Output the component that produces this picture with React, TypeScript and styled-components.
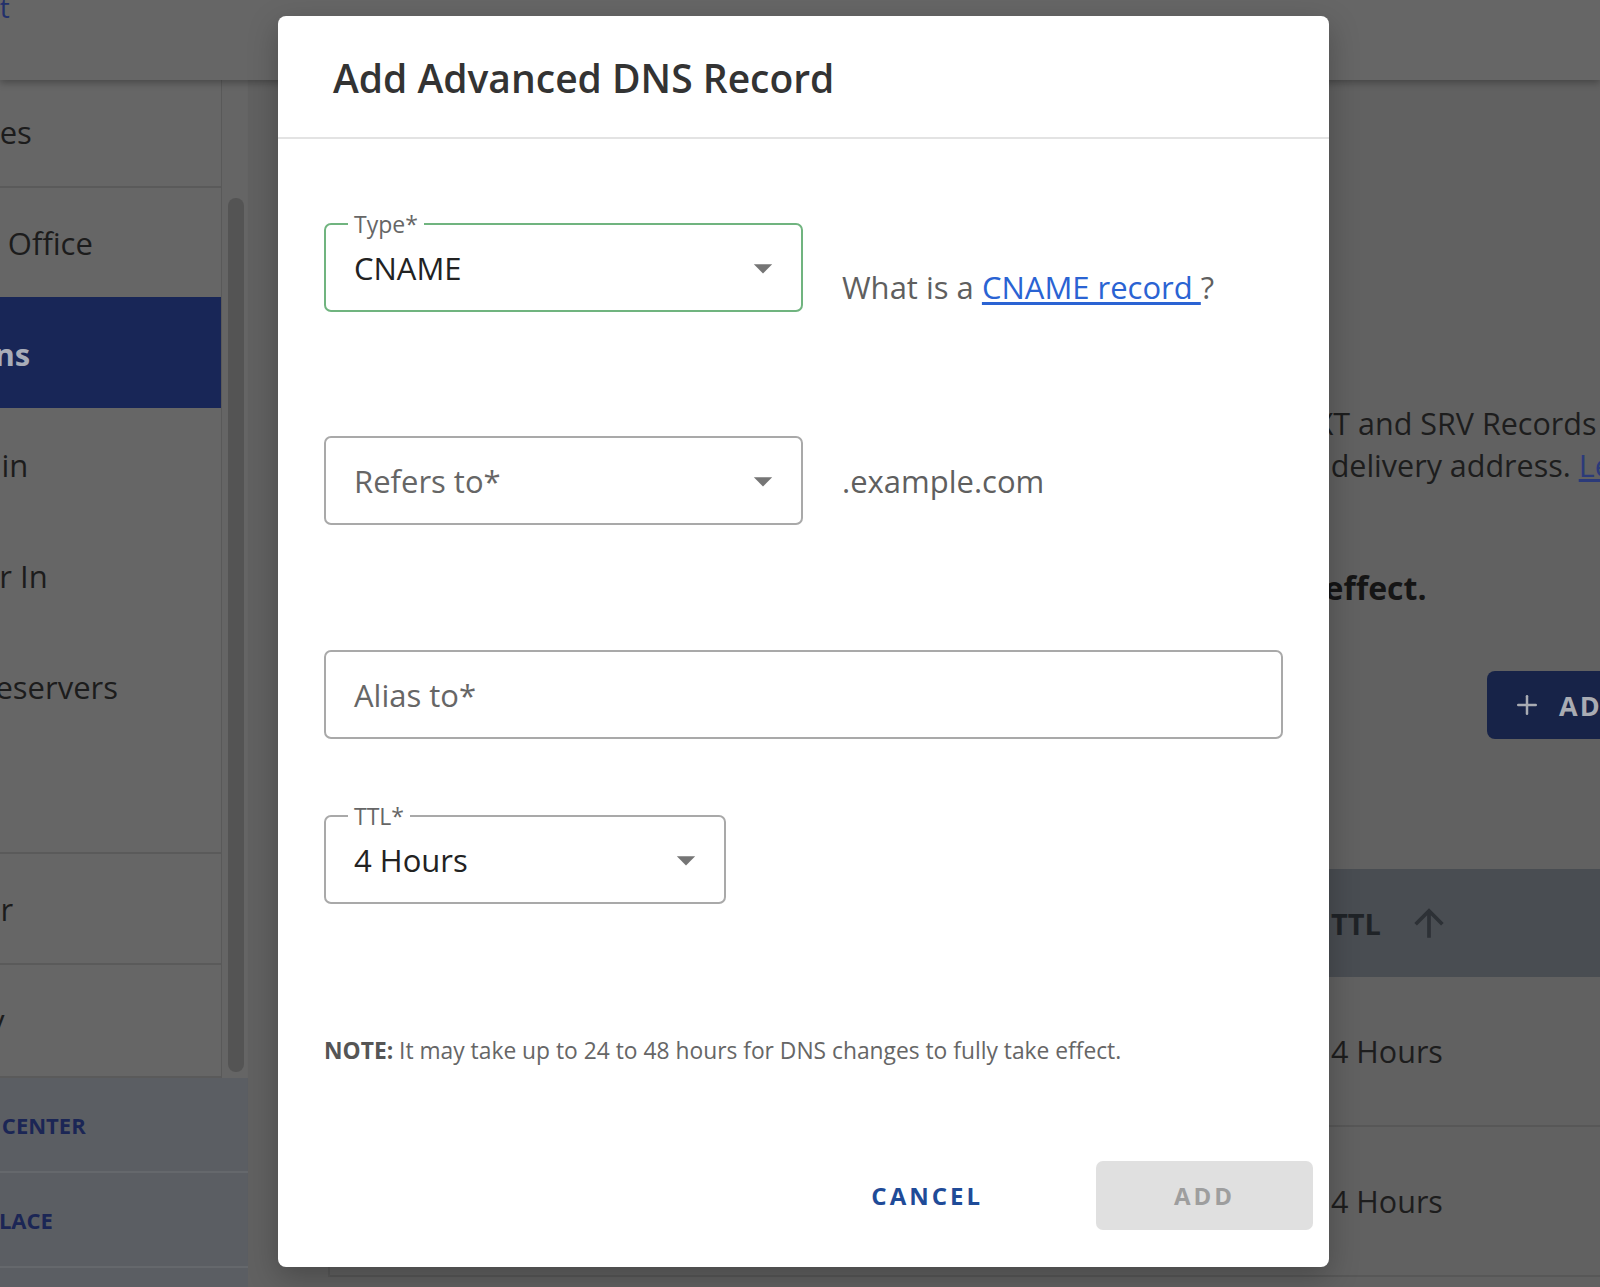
import React from 'react';
import styled, { createGlobalStyle } from 'styled-components';
import { Plus } from 'lucide-react';

const GlobalStyle = createGlobalStyle`
  *, *::before, *::after { box-sizing: border-box; }
  html, body { margin: 0; padding: 0; }
  body {
    font-family: "Open Sans", "Noto Sans", "Liberation Sans", sans-serif;
    background: #616161;
    overflow: hidden;
  }
`;

const Screen = styled.div`
  position: relative;
  width: 1600px;
  height: 1287px;
  overflow: hidden;
  background: #616161;
  display: flex;
  flex-direction: column;
`;

// --- page behind the dialog (already dimmed by the backdrop) ---

const TopBar = styled.header`
  position: relative;
  z-index: 1;
  height: 80px;
  flex-shrink: 0;
  background: #666666;
  box-shadow: 0 3px 7px rgba(0, 0, 0, 0.28);
  overflow: hidden;
`;

const Crumb = styled.a`
  display: block;
  margin: -12px 0 0 -96px;
  font-size: 28px;
  line-height: 38px;
  color: #22306b;
  text-decoration: none;
  white-space: nowrap;
`;

const Workspace = styled.div`
  flex: 1;
  display: flex;
  min-height: 0;
`;

const SideColumn = styled.aside`
  flex-shrink: 0;
  width: 398px;
  margin-left: -150px;
  display: flex;
  flex-direction: column;
`;

const NavArea = styled.div`
  height: 998px;
  flex-shrink: 0;
  display: flex;
`;

const NavList = styled.nav`
  width: 372px;
  overflow: hidden;
  background: #666666;
  border-right: 1px solid #595959;
  border-bottom: 2px solid #5a5a5a;
`;

const NavScroll = styled.div`
  margin-top: -5px;
`;

const NavItem = styled.div<{ $active?: boolean; $divider?: boolean }>`
  height: 111px;
  display: flex;
  align-items: center;
  padding-left: 13px;
  white-space: nowrap;
  font-size: 31px;
  font-weight: ${p => (p.$active ? 700 : 400)};
  color: ${p => (p.$active ? '#a9adb8' : '#1c1c1c')};
  background: ${p => (p.$active ? '#182657' : 'transparent')};
  border-top: 2px solid ${p => (p.$divider ? '#5a5a5a' : 'transparent')};
`;

const ScrollTrack = styled.div`
  width: 26px;
  display: flex;
  padding: 118px 4px 6px 6px;
  background: #656565;
`;

const ScrollThumb = styled.div`
  flex: 1;
  border-radius: 8px;
  background: #545454;
`;

const SideFooter = styled.div`
  flex: 1;
  background: #5b5e63;
`;

const FooterLink = styled.div`
  height: 95px;
  display: flex;
  align-items: center;
  padding-left: 45px;
  white-space: nowrap;
  font-size: 22px;
  font-weight: 700;
  color: #1b2655;
  border-bottom: 2px solid #65686c;
`;

const Main = styled.main`
  flex-shrink: 0;
  width: 1541px;
  padding-left: 80px;
  display: flex;
  flex-direction: column;
`;

const IntroCard = styled.section`
  display: flex;
  flex-direction: column;
  margin-left: -6px;
  padding: 322px 0 41px;
`;

const IntroLine = styled.p`
  margin: 0;
  font-size: 30.5px;
  line-height: 42px;
  color: #1d1d1d;
  white-space: nowrap;
`;

const LearnLink = styled.a`
  color: #2b3a7a;
  text-decoration: underline;
`;

const Warning = styled.p`
  margin: 81px 0 0;
  font-size: 32px;
  font-weight: 700;
  line-height: 42px;
  color: #151515;
  white-space: nowrap;
`;

const ActionRow = styled.div`
  display: flex;
  justify-content: flex-end;
  margin: 62px 0 0 6px;
`;

const AddRecordButton = styled.button`
  width: 302px;
  height: 68px;
  display: flex;
  align-items: center;
  gap: 17px;
  padding: 0 0 0 25px;
  border: 0;
  border-radius: 8px;
  background: #172348;
  color: #a9acb3;
  font-family: inherit;
  font-size: 27px;
  font-weight: 700;
  letter-spacing: 2px;
  white-space: nowrap;
`;

const Table = styled.div`
  margin-top: 89px;
  border-left: 2px solid #595959;
`;

const columns = '200px 390px 387px 1fr';

const TableHead = styled.div`
  height: 108px;
  display: grid;
  grid-template-columns: ${columns};
  align-items: center;
  background: #494d52;
`;

const HeadCell = styled.div`
  display: flex;
  align-items: center;
  gap: 26px;
  padding-left: 24px;
  font-size: 29px;
  font-weight: 700;
  color: #1f2327;
`;

const SortIcon = styled.svg`
  width: 44px;
  height: 44px;
  fill: #2d3136;
`;

const TableRow = styled.div`
  height: 150px;
  display: grid;
  grid-template-columns: ${columns};
  align-items: center;
  border-bottom: 2px solid #575757;
`;

const Cell = styled.div`
  padding-left: 24px;
  font-size: 30.5px;
  color: #1d1d1d;
  white-space: nowrap;
`;

// --- dialog ---

const Backdrop = styled.div`
  position: absolute;
  inset: 0;
  z-index: 10;
`;

const Dialog = styled.div`
  width: 1051px;
  height: 1251px;
  margin: 16px 0 0 278px;
  display: flex;
  flex-direction: column;
  background: #ffffff;
  border-radius: 8px;
  box-shadow: 0 10px 30px rgba(0, 0, 0, 0.25);
`;

const DialogHeader = styled.div`
  height: 123px;
  flex-shrink: 0;
  display: flex;
  align-items: center;
  padding: 2px 0 0 55px;
  border-bottom: 2px solid #e3e3e3;
`;

const Title = styled.h2`
  margin: 0;
  font-size: 39px;
  font-weight: 600;
  color: #333333;
`;

const DialogBody = styled.div`
  display: flex;
  flex-direction: column;
  padding: 0 46px;
`;

const FieldRow = styled.div<{ $gap: number }>`
  display: flex;
  align-items: center;
  gap: 39px;
  margin-top: ${p => p.$gap}px;
`;

const Field = styled.div<{ $width?: number; $focused?: boolean }>`
  position: relative;
  flex-shrink: 0;
  width: ${p => (p.$width ? `${p.$width}px` : '100%')};
  height: 89px;
  display: flex;
  align-items: center;
  padding: 0 16px 0 28px;
  border: 2px solid ${p => (p.$focused ? '#70b47f' : '#a9a9a9')};
  border-radius: 7px;
  background: #ffffff;
`;

const FieldLabel = styled.span`
  position: absolute;
  top: -14px;
  left: 22px;
  padding: 0 6px;
  background: #ffffff;
  font-size: 23px;
  line-height: 26px;
  color: #666666;
`;

const FieldValue = styled.span<{ $placeholder?: boolean }>`
  flex: 1;
  font-size: 31px;
  color: ${p => (p.$placeholder ? '#666666' : '#222222')};
  white-space: nowrap;
`;

const Caret = styled.svg`
  width: 44px;
  height: 44px;
  flex-shrink: 0;
  fill: #757575;
`;

const Helper = styled.div<{ $drop?: number }>`
  margin-top: ${p => p.$drop ?? 0}px;
  font-size: 31px;
  color: #5f5f5f;
  white-space: nowrap;
`;

const HelpLink = styled.a`
  color: #2a63d3;
  text-decoration: underline;
  text-underline-offset: 3px;
`;

const Note = styled.p`
  margin: 132px 0 0;
  font-size: 22.8px;
  line-height: 30px;
  color: #666666;

  strong {
    font-weight: 700;
    color: #555555;
  }
`;

const DialogFooter = styled.div`
  margin-top: auto;
  display: flex;
  justify-content: flex-end;
  align-items: center;
  gap: 89px;
  padding: 0 16px 37px 0;
`;

const TextButton = styled.button`
  height: 69px;
  padding: 0 24px;
  border: 0;
  background: none;
  font-family: inherit;
  font-size: 24px;
  font-weight: 700;
  letter-spacing: 3px;
  color: #1f4b98;
`;

const FilledButton = styled.button`
  width: 217px;
  height: 69px;
  border: 0;
  border-radius: 7px;
  background: #e0e0e0;
  font-family: inherit;
  font-size: 24px;
  font-weight: 700;
  letter-spacing: 3px;
  color: #9e9e9e;
`;

const DropCaret = () => (
  <Caret viewBox="0 0 24 24">
    <path d="M7 10l5 5 5-5z" />
  </Caret>
);

const navItems = [
  { label: 'My Services' },
  { label: 'Microsoft Office', divider: true },
  { label: 'Extensions', active: true },
  { label: 'My Domain' },
  { label: 'A Transfer In' },
  { label: 'Edit Nameservers' },
  { label: 'DNSSEC' },
  { label: 'Forwarder', divider: true },
  { label: 'ID Privacy', divider: true },
];

const records = [
  { type: 'A', host: '@', value: '192.0.2.10', ttl: '4 Hours' },
  { type: 'CNAME', host: 'www', value: 'example.com.', ttl: '4 Hours' },
];

const App = () => {
  return (
    <Screen>
      <GlobalStyle />
      <TopBar>
        <Crumb>Account</Crumb>
      </TopBar>
      <Workspace>
        <SideColumn>
          <NavArea>
            <NavList>
              <NavScroll>
                {navItems.map(item => (
                  <NavItem key={item.label} $active={item.active} $divider={item.divider}>
                    {item.label}
                  </NavItem>
                ))}
              </NavScroll>
            </NavList>
            <ScrollTrack>
              <ScrollThumb />
            </ScrollTrack>
          </NavArea>
          <SideFooter>
            <FooterLink>SUPPORT CENTER</FooterLink>
            <FooterLink>MARKETPLACE</FooterLink>
          </SideFooter>
        </SideColumn>

        <Main>
          <IntroCard>
            <IntroLine>Advanced DNS lets you create or manage your A, AAAA, CNAME, MX, TXT and SRV Records</IntroLine>
            <IntroLine>
              records that map your domain name to a website, mail server or email delivery address.{' '}
              <LearnLink>Learn more</LearnLink>
            </IntroLine>
            <Warning>Note: It may take up to 24 to 48 hours for DNS changes to take effect.</Warning>
            <ActionRow>
              <AddRecordButton>
                <Plus size={30} strokeWidth={2} />
                ADD RECORD
              </AddRecordButton>
            </ActionRow>
          </IntroCard>
          <Table>
            <TableHead>
              <HeadCell>Type</HeadCell>
              <HeadCell>Host</HeadCell>
              <HeadCell>Value</HeadCell>
              <HeadCell>
                TTL
                <SortIcon viewBox="0 0 24 24">
                  <path d="M4 12l1.41 1.41L11 7.83V20h2V7.83l5.58 5.59L20 12l-8-8-8 8z" />
                </SortIcon>
              </HeadCell>
            </TableHead>
            {records.map(r => (
              <TableRow key={r.host}>
                <Cell>{r.type}</Cell>
                <Cell>{r.host}</Cell>
                <Cell>{r.value}</Cell>
                <Cell>{r.ttl}</Cell>
              </TableRow>
            ))}
          </Table>
        </Main>
      </Workspace>

      <Backdrop>
        <Dialog role="dialog">
          <DialogHeader>
            <Title>Add Advanced DNS Record</Title>
          </DialogHeader>
          <DialogBody>
            <FieldRow $gap={84}>
              <Field $width={479} $focused>
                <FieldLabel>Type*</FieldLabel>
                <FieldValue>CNAME</FieldValue>
                <DropCaret />
              </Field>
              <Helper $drop={38}>
                What is a <HelpLink>CNAME record&nbsp;</HelpLink>?
              </Helper>
            </FieldRow>
            <FieldRow $gap={124}>
              <Field $width={479}>
                <FieldValue $placeholder>Refers to*</FieldValue>
                <DropCaret />
              </Field>
              <Helper>.example.com</Helper>
            </FieldRow>
            <FieldRow $gap={125}>
              <Field>
                <FieldValue $placeholder>Alias to*</FieldValue>
              </Field>
            </FieldRow>
            <FieldRow $gap={76}>
              <Field $width={402}>
                <FieldLabel>TTL*</FieldLabel>
                <FieldValue>4 Hours</FieldValue>
                <DropCaret />
              </Field>
            </FieldRow>
            <Note>
              <strong>NOTE:</strong> It may take up to 24 to 48 hours for DNS changes to fully take effect.
            </Note>
          </DialogBody>
          <DialogFooter>
            <TextButton>CANCEL</TextButton>
            <FilledButton disabled>ADD</FilledButton>
          </DialogFooter>
        </Dialog>
      </Backdrop>
    </Screen>
  );
};

export default App;
